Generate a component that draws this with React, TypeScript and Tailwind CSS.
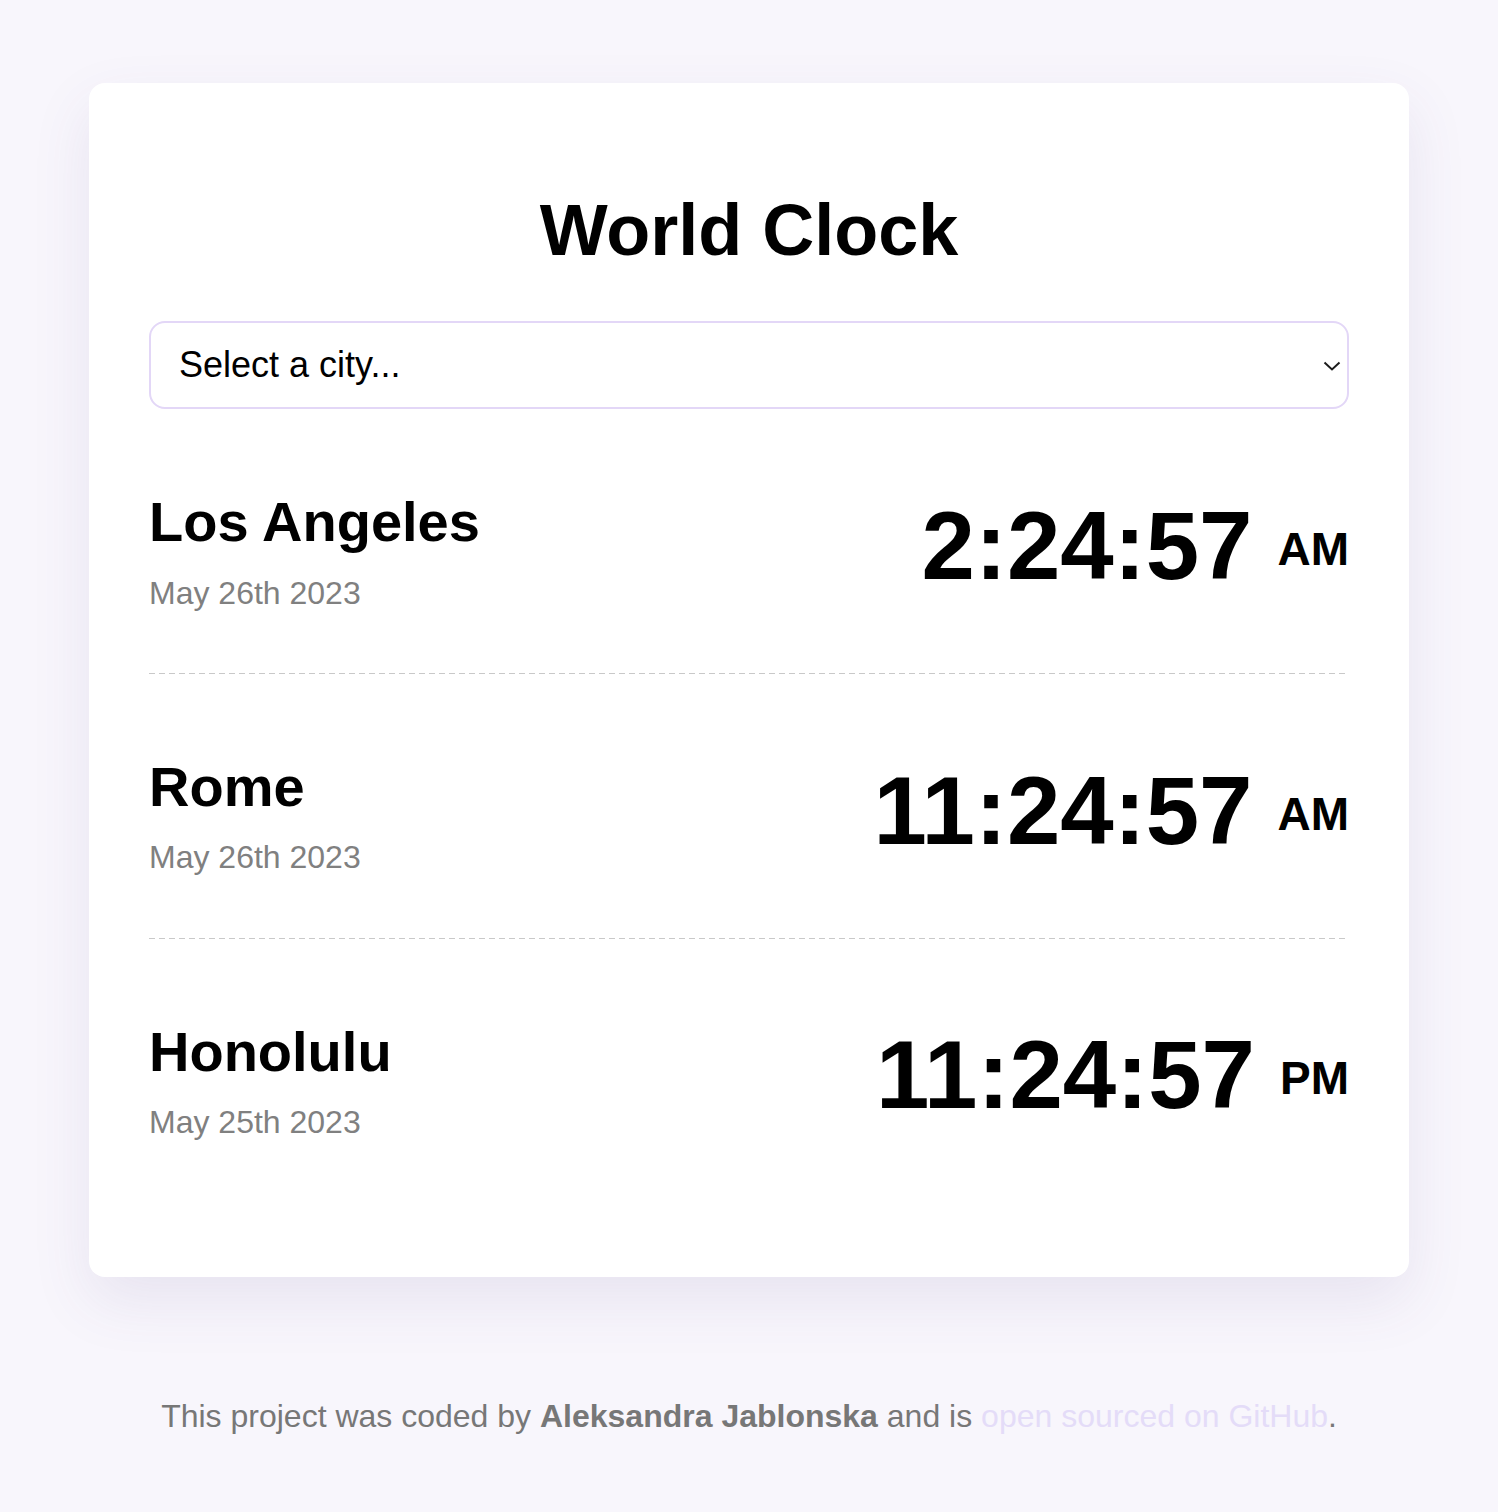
const cities = [
  { name: "Los Angeles", date: "May 26th 2023", time: "2:24:57", ampm: "AM" },
  { name: "Rome", date: "May 26th 2023", time: "11:24:57", ampm: "AM" },
  { name: "Honolulu", date: "May 25th 2023", time: "11:24:57", ampm: "PM" },
];

export default function App() {
  return (
    <div
      className="min-h-[1512px] bg-[#f8f6fc] pt-[83px] text-black"
      style={{ fontFamily: '"Liberation Sans", Arial, sans-serif' }}
    >
      <div className="mx-auto w-[1320px] rounded-[16px] bg-white px-[60px] pt-[104px] pb-[75px] shadow-[0_24px_60px_rgba(90,70,140,0.10)]">
        <h1 className="text-center text-[72px] font-bold leading-[1.2]">World Clock</h1>

        <div className="relative mt-[48px]">
          <select className="h-[88px] w-full appearance-none rounded-[16px] border-2 border-[#e3d7f7] bg-white pl-[28px] text-[36px] outline-none">
            <option>Select a city...</option>
            <option>Tokyo</option>
            <option>Paris</option>
            <option>Sydney</option>
          </select>
          <svg
            className="pointer-events-none absolute right-[8px] top-[40px]"
            width="18"
            height="10"
            viewBox="0 0 18 10"
            fill="none"
          >
            <path d="M1.5 1.5 L9 8.5 L16.5 1.5" stroke="#1c1c1c" strokeWidth="2" />
          </svg>
        </div>

        <div>
          {cities.map((c, i) => (
            <div key={c.name}>
              <div className="flex items-center justify-between pt-[79px] pb-[61px]">
                <div>
                  <h2 className="text-[56px] font-bold leading-[1.2]">{c.name}</h2>
                  <div className="mt-[18px] text-[32px] leading-[1.2] text-[#808080]">{c.date}</div>
                </div>
                <div className="mb-[8px] flex items-center gap-[25px]">
                  <span className="text-[96px] font-bold leading-none">{c.time}</span>
                  <span className="pt-[6px] text-[46px] font-bold leading-none">{c.ampm}</span>
                </div>
              </div>
              {i < cities.length - 1 && (
                <div className="h-px bg-[repeating-linear-gradient(to_right,#c9c9c9_0_6px,transparent_6px_10px)]" />
              )}
            </div>
          ))}
        </div>
      </div>

      <p className="mt-[115px] text-center text-[32px] text-[#777777]">
        This project was coded by <strong className="font-bold">Aleksandra Jablonska</strong> and is{" "}
        <a href="#" className="text-[#e4dcf8]">
          open sourced on GitHub
        </a>
        .
      </p>
    </div>
  );
}
